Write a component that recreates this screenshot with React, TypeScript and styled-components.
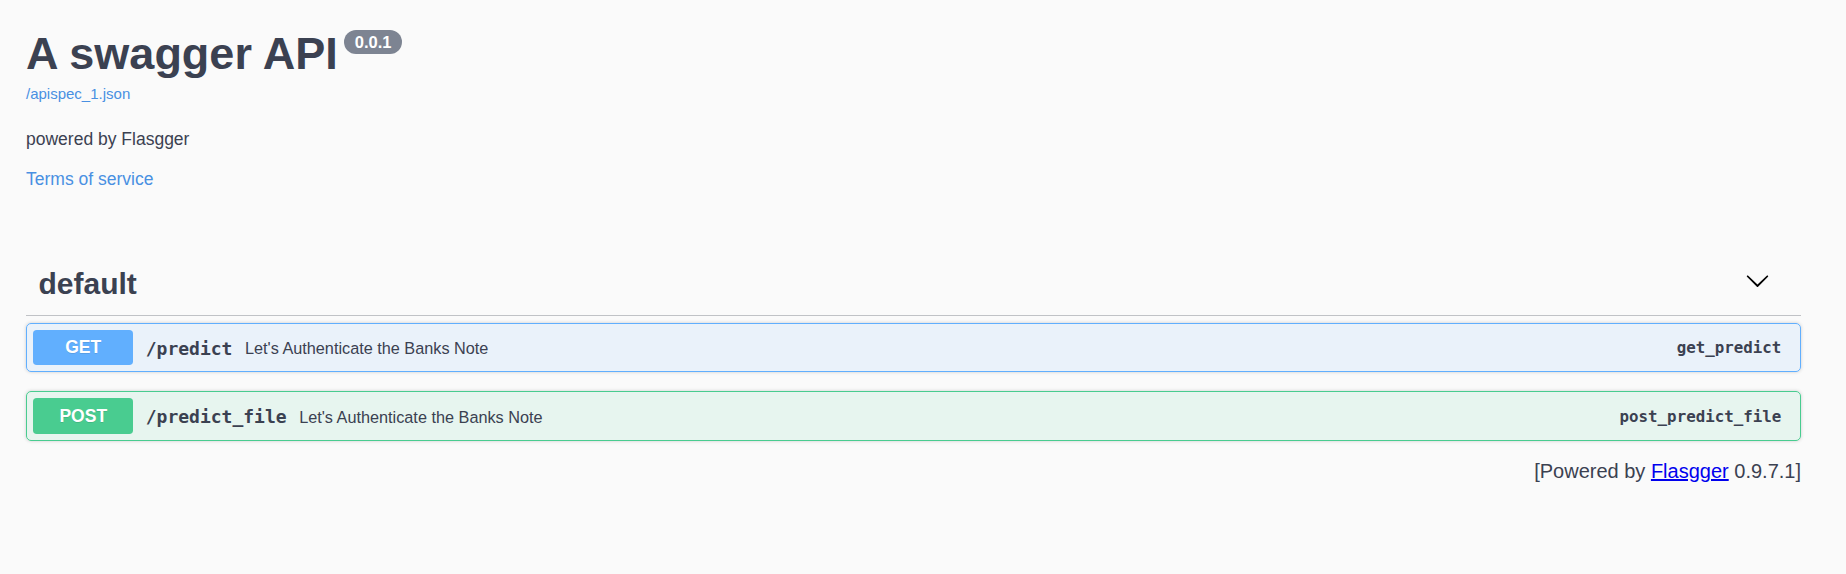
import React from "react";
import styled, { createGlobalStyle } from "styled-components";

const GlobalStyle = createGlobalStyle`
  html, body {
    margin: 0;
    padding: 0;
    background: #fafafa;
  }
  body {
    font-family: "Liberation Sans", Arial, sans-serif;
    color: #3b4151;
  }
  * { box-sizing: border-box; }
`;

const Wrapper = styled.div`
  padding: 28px 45px 40px 26px;
`;

const Info = styled.section`
  display: flex;
  flex-direction: column;
  align-items: flex-start;
`;

const Title = styled.h2`
  margin: 0;
  font-size: 45px;
  line-height: 52px;
  font-weight: 700;
  color: #3b4151;
  white-space: nowrap;
`;

const Version = styled.small`
  display: inline-block;
  vertical-align: top;
  margin: 2px 0 0 6px;
  padding: 0 11px;
  height: 24px;
  line-height: 24px;
  border-radius: 57px;
  background: #7d8492;
  color: #fff;
  font-size: 16.5px;
  font-weight: 700;
`;

const BaseUrl = styled.a`
  display: block;
  margin-top: 5px;
  font-size: 15px;
  line-height: 17px;
  color: #4990e2;
  text-decoration: none;
`;

const Description = styled.p`
  margin: 26.6px 0 0;
  font-size: 17.5px;
  line-height: 20px;
  color: #3b4151;
`;

const Terms = styled.a`
  display: block;
  margin-top: 20.2px;
  font-size: 17.5px;
  line-height: 20px;
  color: #4990e2;
  text-decoration: none;
`;

const TagSection = styled.section`
  margin-top: 64.5px;
`;

const TagHeader = styled.h3`
  margin: 0 0 6.25px;
  height: 63px;
  display: flex;
  align-items: center;
  justify-content: space-between;
  padding: 0 31px 0 12.5px;
  border-bottom: 1px solid rgba(59, 65, 81, 0.3);
  font-size: 30px;
  line-height: 36px;
  font-weight: 700;
  color: #3b4151;
`;

const ExpandButton = styled.button`
  border: none;
  background: none;
  padding: 0;
  margin: 0 0 8px;
  width: 25px;
  height: 25px;
  display: flex;
  cursor: pointer;
`;

const methodColors: Record<string, string> = {
  GET: "#61affe",
  POST: "#49cc90",
};

const methodBgs: Record<string, string> = {
  GET: "rgba(97, 175, 254, 0.1)",
  POST: "rgba(73, 204, 144, 0.1)",
};

const Opblock = styled.div<{ $method: string }>`
  margin: 0 0 18.75px;
  border: 1px solid ${(p) => methodColors[p.$method]};
  border-radius: 5px;
  background: ${(p) => methodBgs[p.$method]};
  box-shadow: 0 0 3.75px rgba(0, 0, 0, 0.19);
`;

const Summary = styled.div`
  display: flex;
  align-items: center;
  padding: 6.25px;
`;

const MethodBadge = styled.span<{ $method: string }>`
  min-width: 100px;
  padding: 7.5px 0;
  line-height: 20.25px;
  font-size: 17.5px;
  font-weight: 700;
  text-align: center;
  border-radius: 3.75px;
  background: ${(p) => methodColors[p.$method]};
  color: #fff;
  text-shadow: 0 1px 0 rgba(0, 0, 0, 0.1);
`;

const Path = styled.span`
  padding: 2px 12.5px 0;
  font-family: "DejaVu Sans Mono", "Liberation Mono", monospace;
  font-size: 18px;
  line-height: 25px;
  font-weight: 700;
  color: #3b4151;
`;

const SummaryDescription = styled.span`
  flex: 1 1 auto;
  padding-top: 2px;
  font-size: 16.25px;
  line-height: 20px;
  color: #3b4151;
`;

const OperationId = styled.span`
  padding: 2px 12.5px 0 0;
  font-family: "DejaVu Sans Mono", "Liberation Mono", monospace;
  font-size: 15.8px;
  line-height: 22px;
  font-weight: 700;
  color: #3b4151;
`;

const Footer = styled.div`
  margin-top: 1.3px;
  text-align: right;
  font-size: 20px;
  line-height: 23px;
  color: #3b4151;

  a {
    color: #0000ee;
    text-decoration: underline;
  }
`;

const Chevron = () => (
  <svg width="25" height="25" viewBox="0 0 20 20" aria-hidden="true">
    <path
      fill="#000"
      d="M17.418 6.109c.272-.268.709-.268.979 0s.271.701 0 .969l-7.908 7.83c-.27.268-.707.268-.979 0l-7.908-7.83c-.27-.268-.27-.701 0-.969.271-.268.709-.268.979 0L10 13.25l7.418-7.141z"
    />
  </svg>
);

const operations = [
  {
    method: "GET",
    path: "/predict",
    description: "Let's Authenticate the Banks Note",
    operationId: "get_predict",
  },
  {
    method: "POST",
    path: "/predict_file",
    description: "Let's Authenticate the Banks Note",
    operationId: "post_predict_file",
  },
];

export default function App() {
  return (
    <>
      <GlobalStyle />
      <Wrapper>
        <Info>
          <Title>
            A swagger API<Version>0.0.1</Version>
          </Title>
          <BaseUrl href="#">/apispec_1.json</BaseUrl>
          <Description>powered by Flasgger</Description>
          <Terms href="#">Terms of service</Terms>
        </Info>
        <TagSection>
          <TagHeader>
            <span>default</span>
            <ExpandButton aria-label="collapse">
              <Chevron />
            </ExpandButton>
          </TagHeader>
          {operations.map((op) => (
            <Opblock key={op.path} $method={op.method}>
              <Summary>
                <MethodBadge $method={op.method}>{op.method}</MethodBadge>
                <Path>{op.path}</Path>
                <SummaryDescription>{op.description}</SummaryDescription>
                <OperationId>{op.operationId}</OperationId>
              </Summary>
            </Opblock>
          ))}
        </TagSection>
        <Footer>
          [Powered by <a href="#">Flasgger</a> 0.9.7.1]
        </Footer>
      </Wrapper>
    </>
  );
}
